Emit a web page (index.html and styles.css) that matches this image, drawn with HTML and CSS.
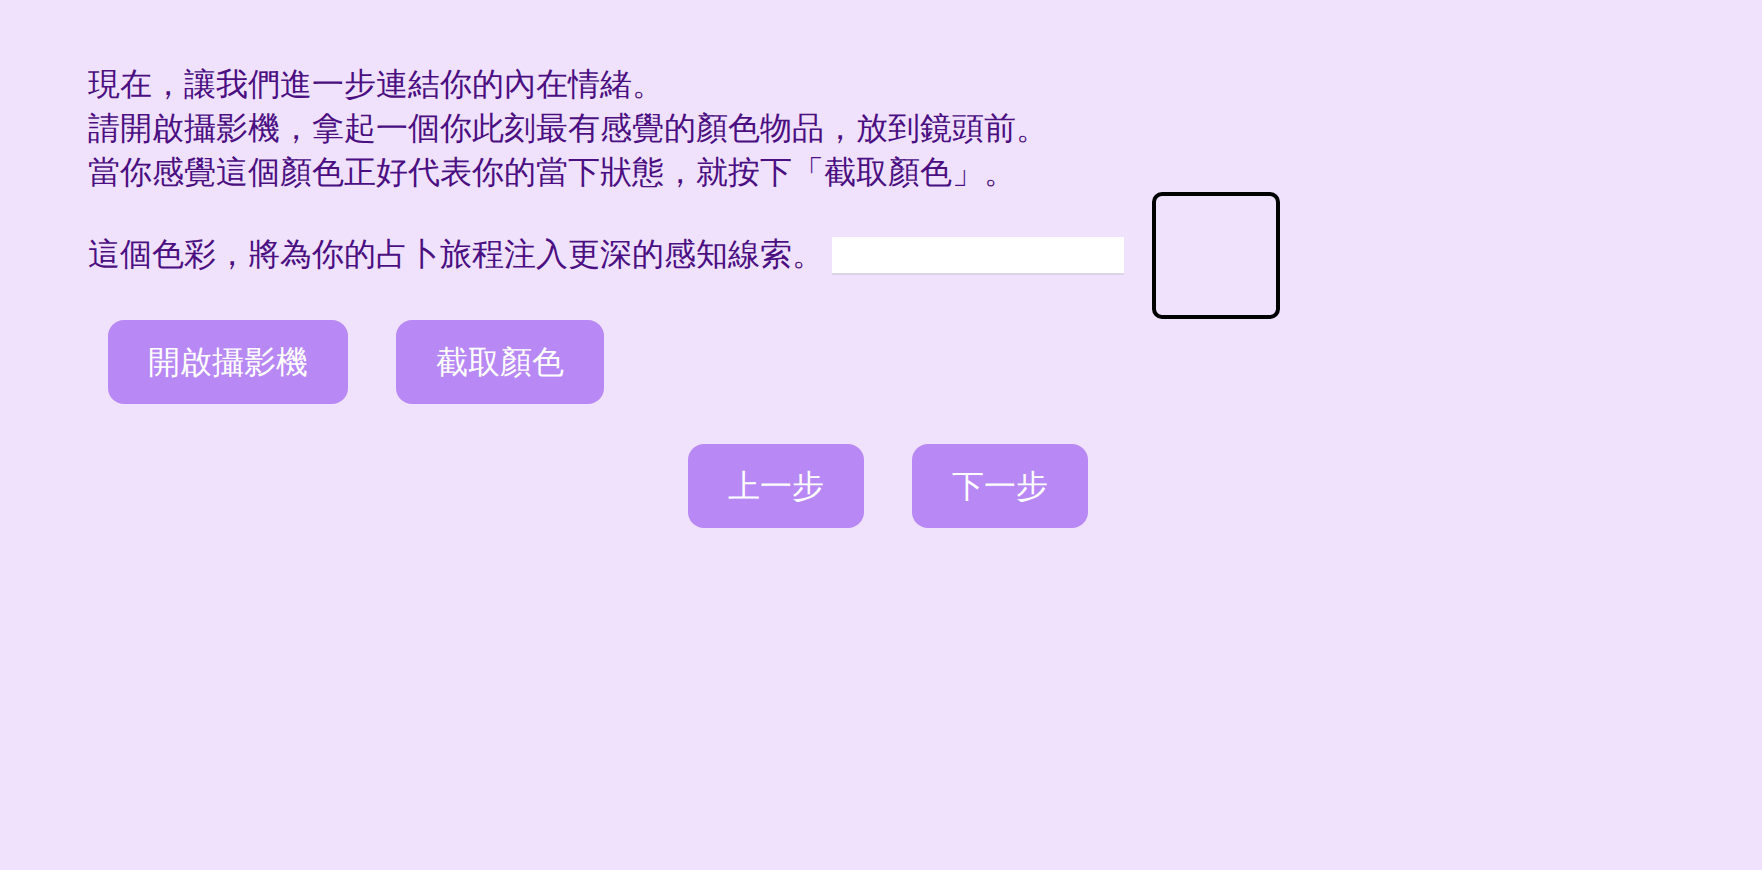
FILE: index.html
```html
<!DOCTYPE html>
<html lang="zh-Hant">
<head>
<meta charset="utf-8">
<title>色彩感知</title>
<link rel="stylesheet" href="styles.css">
</head>
<body>
<main class="page">
  <div class="intro">
    <p>現在，讓我們進一步連結你的內在情緒。</p>
    <p>請開啟攝影機，拿起一個你此刻最有感覺的顏色物品，放到鏡頭前。</p>
    <p>當你感覺這個顏色正好代表你的當下狀態，就按下「截取顏色」。</p>
  </div>
  <div class="color-row">
    <span class="label">這個色彩，將為你的占卜旅程注入更深的感知線索。</span>
    <input class="color-input" type="text">
    <div class="swatch"></div>
  </div>
  <div class="actions">
    <button class="btn">開啟攝影機</button>
    <button class="btn">截取顏色</button>
  </div>
  <div class="nav">
    <button class="btn">上一步</button>
    <button class="btn">下一步</button>
  </div>
</main>
</body>
</html>
```

FILE: styles.css
```css
html, body {
  margin: 0;
  padding: 0;
}
body {
  background: #f0e1fc;
  color: #4b0f82;
  font-family: "Liberation Serif", serif;
}
.page {
  padding: 62px 74px 0 88px;
}
.intro p {
  margin: 0;
  font-size: 32px;
  line-height: 44px;
}
.color-row {
  display: flex;
  align-items: center;
  margin-top: -2px;
}
.label {
  font-size: 32px;
  line-height: 44px;
  position: relative;
  top: -2px;
}
.color-input {
  width: 292px;
  height: 38px;
  margin-left: 8px;
  box-sizing: border-box;
  border: none;
  border-bottom: 2px solid #ddd4e6;
  background: #fff;
  outline: none;
  padding: 0;
}
.swatch {
  width: 128px;
  height: 127px;
  margin-left: 28px;
  box-sizing: border-box;
  border: 4px solid #000;
  border-radius: 10px;
}
.actions {
  display: flex;
  gap: 48px;
  padding-left: 20px;
  margin-top: 1px;
}
.nav {
  display: flex;
  justify-content: center;
  gap: 48px;
  margin-top: 40px;
}
.btn {
  font-family: "Liberation Serif", serif;
  font-size: 32px;
  line-height: 44px;
  padding: 20px 40px;
  border: none;
  border-radius: 16px;
  background: #b888f4;
  color: #fff;
  cursor: pointer;
}
```
